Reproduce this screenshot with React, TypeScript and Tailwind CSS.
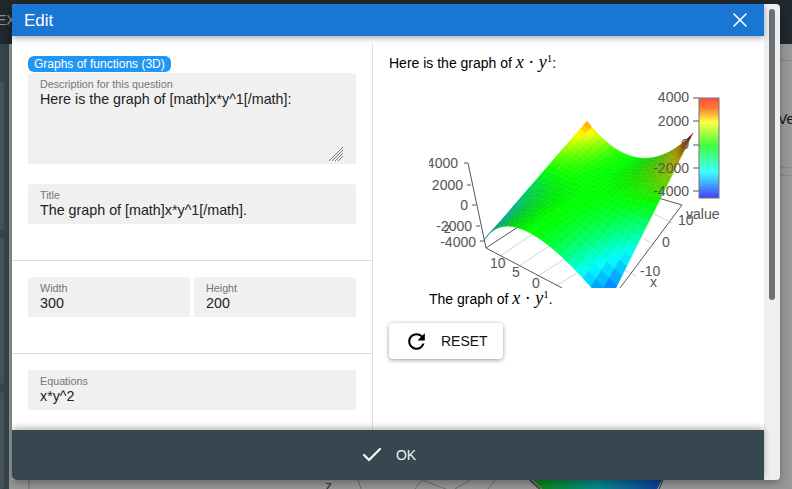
import React from 'react';
import { X, Check } from 'lucide-react';

const SANS = 'font-["Liberation_Sans",Arial,sans-serif]';

const stops: [number, number[]][] = [
  [-1, [0, 60, 255]],
  [-0.5, [0, 255, 255]],
  [0, [0, 255, 0]],
  [0.5, [255, 255, 0]],
  [1, [255, 0, 0]],
];

const colorFor = (z: number, shade: number) => {
  let i = 0;
  while (i < stops.length - 2 && z > stops[i + 1][0]) i++;
  const [a, ca] = stops[i];
  const [b, cb] = stops[i + 1];
  const t = Math.max(0, Math.min(1, (z - a) / (b - a)));
  const c = ca.map((v, k) => Math.round((v + (cb[k] - v) * t) * shade));
  return `rgb(${c[0]},${c[1]},${c[2]})`;
};

// edge u=0 and u=1 are parabolas in v, straight lines in between
const point = (u: number, v: number): [number, number] => {
  const s = u * (1.35 - 0.35 * u); // far side of the surface is compressed
  const bx = 484 + 61 * v + 62 * v * v;
  const by = 240 - 94 * v + 160 * v * v;
  const ax = 587 + 106 * v;
  const ay = 121 + 136 * v - 124 * v * v;
  return [bx + (ax - bx) * s, by + (ay - by) * s];
};

const N = 22;
const cells: { d: string; fill: string }[] = [];
for (let i = 0; i < N; i++) {
  for (let j = 0; j < N; j++) {
    const pts = [
      point(i / N, j / N),
      point((i + 1) / N, j / N),
      point((i + 1) / N, (j + 1) / N),
      point(i / N, (j + 1) / N),
    ];
    const x = ((i + 0.5) / N) * 2 - 1;
    const y = 0.87 - 1.87 * ((j + 0.5) / N);
    const dark = Math.max(0, -x * y);
    cells.push({
      d: 'M' + pts.map((p) => `${p[0].toFixed(1)} ${p[1].toFixed(1)}`).join('L') + 'Z',
      fill: colorFor(x * y * y, 1 - 0.55 * Math.pow(dark, 0.8)),
    });
  }
}

const labels: [string, number, number, string?][] = [
  ['4000', 458, 168, 'end'],
  ['2000', 463, 190, 'end'],
  ['0', 468, 210, 'end'],
  ['-2000', 472, 231, 'end'],
  ['-4000', 476, 247, 'end'],
  ['z', 444, 233],
  ['10', 490, 268],
  ['5', 512, 277],
  ['0', 532, 288],
  ['10', 678, 225],
  ['0', 662, 247],
  ['-10', 640, 276],
  ['x', 650, 287],
  ['4000', 689, 102, 'end'],
  ['2000', 689, 126, 'end'],
  ['0', 689, 149, 'end'],
  ['-2000', 689, 173, 'end'],
  ['-4000', 689, 196, 'end'],
  ['value', 686, 219],
];

const Plot = () => (
  <svg width="300" height="200" viewBox="429 88 300 200" className="block ml-10 overflow-hidden">
    <defs>
      <linearGradient id="bar" x1="0" y1="0" x2="0" y2="1">
        <stop offset="0" stopColor="#ff4a3a" />
        <stop offset="0.1" stopColor="#ff7a35" />
        <stop offset="0.24" stopColor="#ffff40" />
        <stop offset="0.48" stopColor="#40ff40" />
        <stop offset="0.74" stopColor="#40ffff" />
        <stop offset="1" stopColor="#4040ff" />
      </linearGradient>
    </defs>
    <g stroke="#d4d4d4" strokeWidth="1" fill="none">
      <path d="M500 256L560 216M519 266L580 226M538 276L600 236M556 286L620 246" />
      <path d="M654 214L672 223M644 239L656 245M624 270L636 276" />
    </g>
    <g stroke="#555" strokeWidth="1" fill="none">
      <path d="M486 248L562 288M486 248L521 225M682 205L655 197M682 205L620 288" />
      <path d="M486 248L468 163L464 163M471 185L467 185M476 205L472 205M480 226L476 226M484 241L480 241" />
      <path d="M693 98L699 98M693 121L699 121M693 145L699 145M693 168L699 168M693 191L699 191" />
    </g>
    {cells.map((c, i) => (
      <path key={i} d={c.d} fill={c.fill} stroke={c.fill} strokeWidth="0.4" />
    ))}
    <rect x="699" y="98" width="20" height="100" fill="url(#bar)" stroke="#777" strokeWidth="1" />
    {labels.map(([t, x, y, a], i) => (
      <text key={i} x={x} y={y} textAnchor={a === 'end' ? 'end' : 'start'} fontSize="14" fill="#555" fontFamily="Liberation Sans, Arial, sans-serif">
        {t}
      </text>
    ))}
  </svg>
);

const Math1 = () => (
  <span className='font-["Liberation_Serif",serif] italic text-[18px] leading-none'>
    x <span className="not-italic">·</span> y<sup className="not-italic text-[11px] leading-none -top-[6px]">1</sup>
  </span>
);

const Field = ({ label, value, className }: { label: string; value: string; className: string }) => (
  <div className={`bg-[#f0f0f0] rounded-t pl-3 pt-[5px] ${className}`}>
    <div className="text-[10.75px] leading-[13px] text-[#757575]">{label}</div>
    <div className="text-[14.3px] leading-[18px] -mt-px text-[#222]">{value}</div>
  </div>
);

export default function App() {
  return (
    <div className={`relative w-[792px] h-[489px] overflow-hidden bg-[#999999] ${SANS}`}>
      {/* page behind the dialog */}
      <div className="h-[44px] bg-[#20282d] pt-[11px] text-[14px] leading-[18px] text-[#8c9296] -indent-[3px]">EX</div>
      <div className="absolute left-0 top-[44px] bottom-0 w-[9px] bg-[#36454c] flex flex-col gap-[8px] pt-[37px]">
        <div className="h-[154px] w-[4px] bg-[#44535a] rounded-r" />
        <div className="h-[151px] w-[4px] bg-[#44535a] rounded-r" />
        <div className="h-[100px] w-[4px] bg-[#44535a] rounded-r" />
      </div>
      <div className="absolute left-[778px] top-[110px] text-[14px] leading-[18px] text-[#111]">Ve</div>
      <div className="absolute right-0 top-[60px] w-[12px] h-px bg-[#8a8a8a]" />
      <div className="absolute right-0 top-[167px] w-[12px] h-px bg-[#8a8a8a]" />
      <div className="absolute right-0 top-[175px] w-[12px] h-px bg-[#8a8a8a]" />
      <svg className="absolute left-0 top-[480px]" width="792" height="9" viewBox="0 480 792 9">
        <defs>
          <linearGradient id="under" x1="0" y1="0" x2="1" y2="0">
            <stop offset="0" stopColor="#0a8a10" />
            <stop offset="0.5" stopColor="#0a8a90" />
            <stop offset="1" stopColor="#0a40a0" />
          </linearGradient>
        </defs>
        <path d="M29 480V489M358 480L361 489M422 480L415 489M422 480L446 489M470 480L455 489M495 480L488 489" stroke="#6f6f6f" fill="none" />
        <path d="M533 480H662L657 489H542Z" fill="url(#under)" />
        <path d="M530 480L540 489" stroke="#444" strokeWidth="2" />
        <path d="M663 480L659 489" stroke="#333" />
        <text x="325" y="491" fontSize="14" fill="#333">z</text>
      </svg>

      {/* dialog */}
      <div className="absolute left-[12px] top-[4px] w-[768px] h-[476px] flex bg-[#eeeff1] rounded shadow-[0_3px_10px_rgba(0,0,0,0.35)] overflow-hidden">
        <div className="w-[752px] flex flex-col bg-white">
          <div className="relative z-10 h-[32px] shrink-0 bg-[#1976d2] flex items-center justify-between pl-3 pr-3 text-white shadow-[0_2px_6px_rgba(0,0,0,0.35)]">
            <span className="text-[17px] pt-px">Edit</span>
            <X size={24} strokeWidth={1.6} />
          </div>
          <div className="flex-1 min-h-0 flex pt-2 overflow-hidden">
            <div className="w-[361px] shrink-0 border-r border-[#dddddd] flex flex-col pt-3">
              <div className="px-4">
                <div className="w-[143px] h-4 rounded-[6px] bg-[#2196f3] text-white text-[12px] leading-4 pl-[6px] whitespace-nowrap">
                  Graphs of functions (3D)
                </div>
                <div className="relative mt-px">
                  <Field label="Description for this question" value="Here is the graph of [math]x*y^1[/math]:" className="h-[91px]" />
                  <svg className="absolute right-[13px] bottom-[3px]" width="14" height="14" viewBox="0 0 14 14" stroke="#777" strokeWidth="1">
                    <path d="M0 14L14 0M3 14L14 3M6 14L14 6M9 14L14 9" />
                  </svg>
                </div>
                <Field label="Title" value="The graph of [math]x*y^1[/math]." className="h-10 mt-5" />
              </div>
              <div className="mt-9 border-t border-[#dddddd] pt-4 px-4 flex gap-1 h-[93px]">
                <Field label="Width" value="300" className="h-10 flex-1" />
                <Field label="Height" value="200" className="h-10 flex-1" />
              </div>
              <div className="border-t border-[#dddddd] pt-4 px-4">
                <Field label="Equations" value="x*y^2" className="h-10" />
              </div>
            </div>
            <div className="flex-1 pl-4 pt-[7px]">
              <p className="text-[14px] leading-6 text-black h-[37px]">
                Here is the graph of <Math1 />:
              </p>
              <Plot />
              <p className="ml-10 text-[14px] leading-[22px] text-black">
                The graph of <Math1 />.
              </p>
              <button className="mt-[13px] w-[114px] h-9 bg-white rounded shadow-[0_1px_4px_rgba(0,0,0,0.4)] flex items-center text-[14px] text-[#111] pl-[15px] gap-3">
                <svg width="25" height="25" viewBox="0 0 24 24" fill="#000">
                  <path d="M17.65 6.35A7.96 7.96 0 0 0 12 4a8 8 0 1 0 7.73 10h-2.08A6 6 0 1 1 12 6c1.66 0 3.14.69 4.22 1.78L13 11h7V4l-2.35 2.35z" />
                </svg>
                RESET
              </button>
            </div>
          </div>
          <div className="relative z-10 h-[50px] shrink-0 bg-[#37474f] rounded-bl flex items-center justify-center gap-3 text-white text-[14px] shadow-[0_-2px_6px_rgba(0,0,0,0.3)]">
            <Check size={24} strokeWidth={2.2} />
            <span className="text-[#eef2f4]">OK</span>
          </div>
        </div>
        <div className="w-4 relative">
          <div className="absolute left-[5px] top-[5px] w-[6px] h-[291px] rounded-full bg-[#6f7072]" />
        </div>
      </div>
    </div>
  );
}
